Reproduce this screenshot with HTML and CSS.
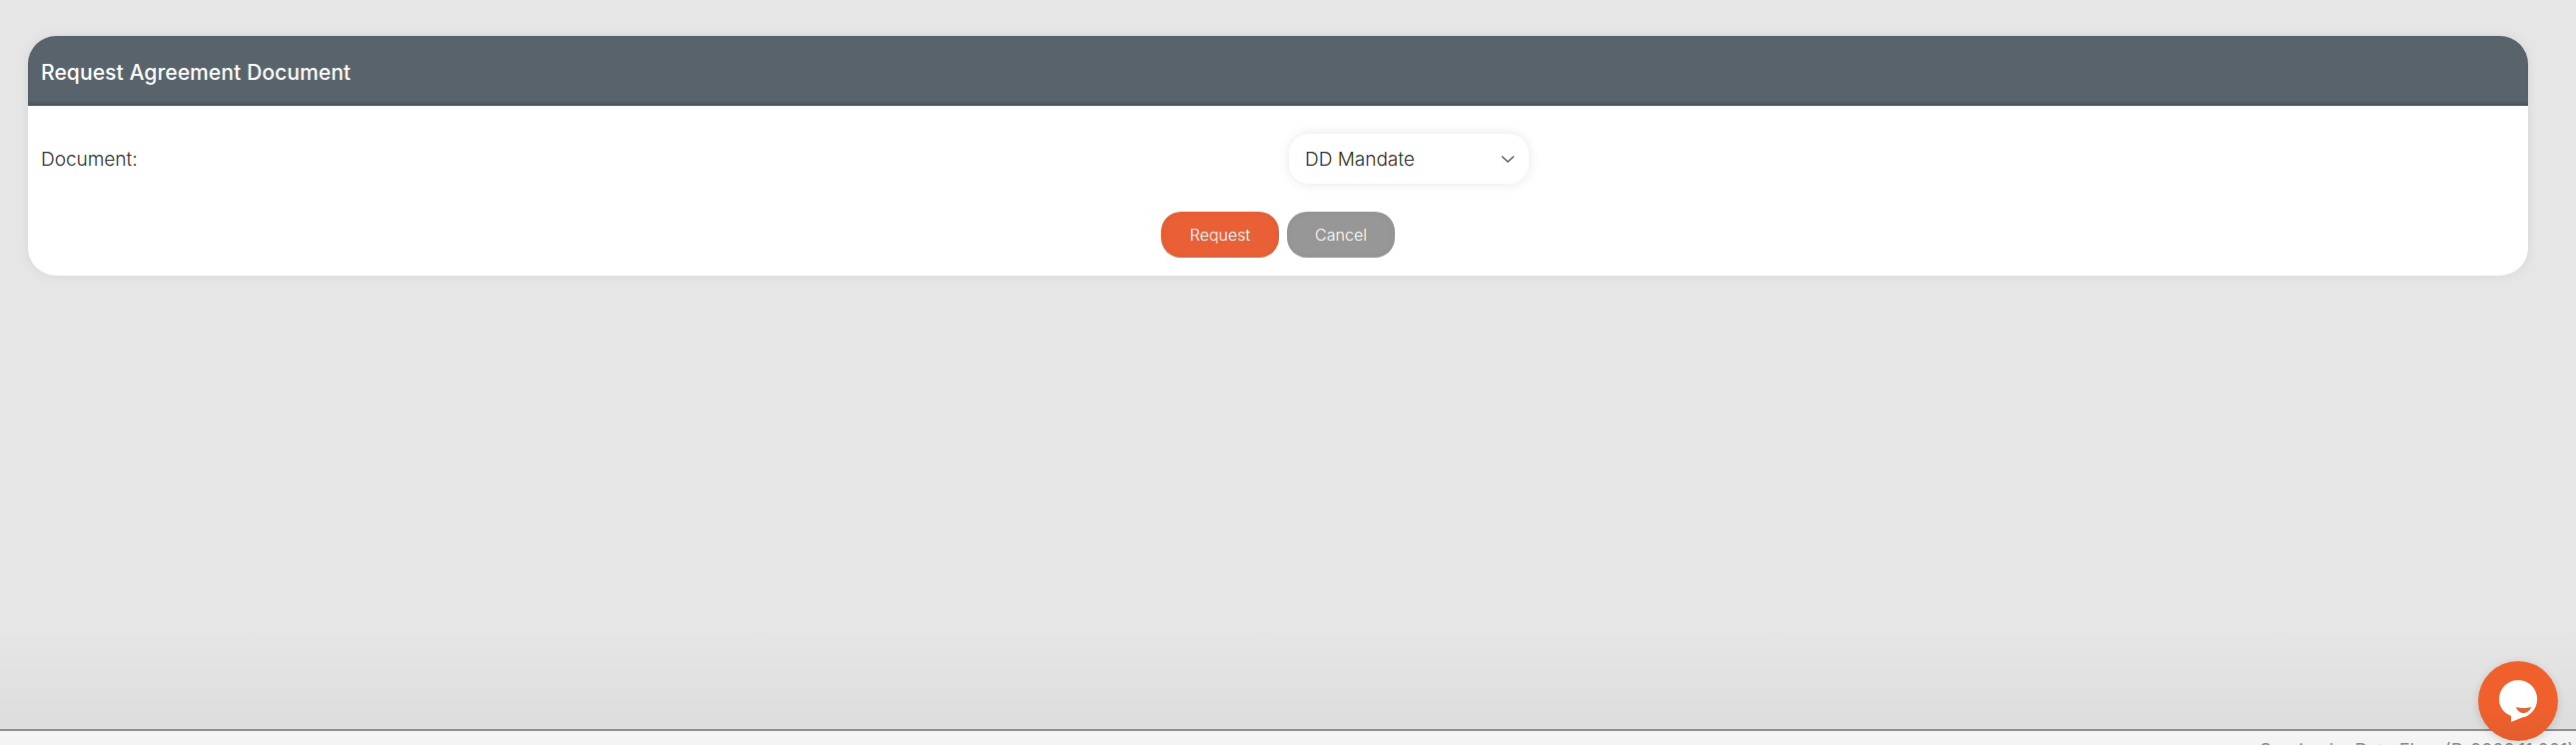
FILE: index.html
```html
<!DOCTYPE html>
<html lang="en">
<head>
<meta charset="utf-8">
<title>Request Agreement Document</title>
<link rel="stylesheet" href="styles.css">
</head>
<body>
<main class="content">
  <section class="card">
    <header class="card-head">Request Agreement Document</header>
    <div class="card-body">
      <div class="row">
        <div class="label">Document:</div>
        <div class="field">
          <div class="select">
            <span>DD Mandate</span>
            <svg class="chev" width="14" height="9" viewBox="0 0 14 9"><path d="M1 1.500 7 7l6-5.500" fill="none" stroke="#555" stroke-width="1.500"/></svg>
          </div>
        </div>
      </div>
      <div class="actions">
        <button class="btn btn-primary">Request</button>
        <button class="btn btn-muted">Cancel</button>
      </div>
    </div>
  </section>
</main>
<footer class="footer">Service by Data Flow (R-2020.11.001)</footer>
<button class="chat" aria-label="Chat">
  <svg width="40" height="44" viewBox="0 0 40 44"><path d="M20 1A19 19 0 0 0 1 20c0 7.300 4.100 13.600 12 17v6l11-4.400A19 19 0 0 0 20 1Z" fill="#fff"/><path d="M18 28c4.500 1.300 10.500 1.300 15 0-1 3.600-4 6-7.500 6S19 31.600 18 28Z" fill="#ee5f2e"/></svg>
</button>
</body>
</html>
```
FILE: styles.css
```css
* { box-sizing: border-box; }
html, body { margin: 0; height: 100%; }
body {
  position: relative;
  width: 2578px;
  height: 746px;
  overflow: hidden;
  background: #e6e6e6;
  font-family: Inter, "Liberation Sans", sans-serif;
  display: flex;
  flex-direction: column;
}
.content { flex: 1; padding: 36px 48px 0 28px; background: linear-gradient(#e6e6e6 0, #e6e6e6 630px, #dddddd 100%); }
.card {
  height: 240px;
  background: #fff;
  border-radius: 28px;
  overflow: hidden;
  box-shadow: 0 0 12px rgba(0,0,0,.07);
}
.card-head {
  height: 70px;
  padding: 2px 13px 0;
  display: flex;
  align-items: center;
  background: #59636b;
  box-shadow: inset 0 -4px 4px -2px rgba(0,0,0,.2);
  color: #fff;
  font-size: 21px;
  font-weight: 500;
  letter-spacing: .1px;
}
.card-body { padding: 28px 13px 0; }
.row { display: flex; align-items: center; height: 50px; }
.label { width: 1249px; color: #2b2b2b; font-size: 19px; font-weight: 300; }
.field { flex: 1; }
.select {
  width: 240px;
  height: 50px;
  padding: 0 14px 0 16px;
  display: flex;
  align-items: center;
  justify-content: space-between;
  background: #fff;
  border-radius: 20px;
  box-shadow: 0 0 12px rgba(0,0,0,.1);
  color: #2b2b2b;
  font-size: 19px;
  font-weight: 300;
}
.actions { display: flex; justify-content: center; gap: 8px; margin-top: 28px; }
.btn {
  height: 46px;
  border: 0;
  border-radius: 20px;
  color: #fff;
  font-family: inherit;
  font-size: 16px;
  font-weight: 300;
}
.btn-primary { width: 118px; background: #ea6036; box-shadow: inset 0 0 6px rgba(160,60,20,.18); }
.btn-muted { width: 108px; background: #979797; box-shadow: inset 0 0 6px rgba(0,0,0,.06); }
.footer {
  height: 16px;
  border-top: 2px solid #8f8f8f;
  background: #f4f4f4;
  color: #8a8a8a;
  font-size: 18px;
  line-height: 24px;
  padding: 8px 2px 0 0;
  text-align: right;
  white-space: nowrap;
  overflow: hidden;
}
.chat {
  position: absolute;
  left: 2480px;
  top: 662px;
  width: 80px;
  height: 80px;
  padding: 0;
  border: 0;
  border-radius: 50%;
  background: linear-gradient(#ef602d 60%, #e35d2c);
  box-shadow: 0 2px 8px rgba(0,0,0,.15);
  display: flex;
  align-items: center;
  justify-content: center;
}
```
